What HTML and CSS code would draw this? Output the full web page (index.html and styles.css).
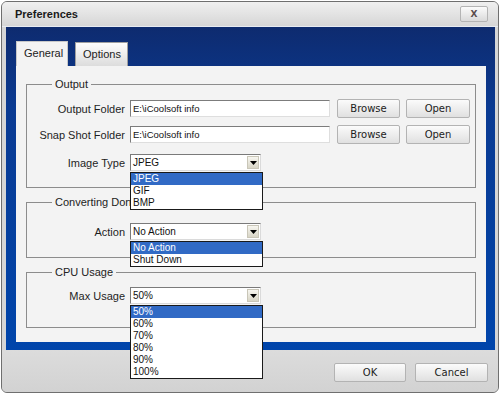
FILE: index.html
```html
<!DOCTYPE html>
<html lang="en">
<head>
    <meta charset="UTF-8">
    <title>Preferences</title>
    <link rel="stylesheet" href="styles.css">
</head>
<body>
    <div class="window">
        <div class="titlebar">
            <span class="title">Preferences</span>
            <button class="close">X</button>
        </div>

        <div class="client">
            <div class="tabs">
                <div class="tab active">General</div>
                <div class="tab">Options</div>
            </div>

            <div class="panel">
                <fieldset class="group group-output">
                    <legend>Output</legend>
                    <div class="row">
                        <label>Output Folder</label>
                        <div class="field">E:\iCoolsoft info</div>
                        <button class="btn browse">Browse</button>
                        <button class="btn open">Open</button>
                    </div>
                    <div class="row">
                        <label>Snap Shot Folder</label>
                        <div class="field">E:\iCoolsoft info</div>
                        <button class="btn browse">Browse</button>
                        <button class="btn open">Open</button>
                    </div>
                    <div class="row row-combo">
                        <label>Image Type</label>
                        <div class="combo">
                            <span>JPEG</span>
                            <span class="arrow"><svg width="7" height="4" viewBox="0 0 7 4"><path d="M0 0h7L3.5 4z" fill="#000"/></svg></span>
                            <ul class="list">
                                <li class="sel">JPEG</li>
                                <li>GIF</li>
                                <li>BMP</li>
                            </ul>
                        </div>
                    </div>
                </fieldset>

                <fieldset class="group group-convert">
                    <legend>Converting Done</legend>
                    <div class="row row-combo">
                        <label>Action</label>
                        <div class="combo">
                            <span>No Action</span>
                            <span class="arrow"><svg width="7" height="4" viewBox="0 0 7 4"><path d="M0 0h7L3.5 4z" fill="#000"/></svg></span>
                            <ul class="list">
                                <li class="sel">No Action</li>
                                <li>Shut Down</li>
                            </ul>
                        </div>
                    </div>
                </fieldset>

                <fieldset class="group group-cpu">
                    <legend>CPU Usage</legend>
                    <div class="row row-combo">
                        <label>Max Usage</label>
                        <div class="combo">
                            <span>50%</span>
                            <span class="arrow"><svg width="7" height="4" viewBox="0 0 7 4"><path d="M0 0h7L3.5 4z" fill="#000"/></svg></span>
                            <ul class="list">
                                <li class="sel">50%</li>
                                <li>60%</li>
                                <li>70%</li>
                                <li>80%</li>
                                <li>90%</li>
                                <li>100%</li>
                            </ul>
                        </div>
                    </div>
                </fieldset>
            </div>
        </div>

        <div class="actions">
            <button class="btn ok">OK</button>
            <button class="btn cancel">Cancel</button>
        </div>
    </div>
</body>
</html>
```

FILE: styles.css
```css
body {
    margin: 0;
    background: #fff;
    font-family: "Liberation Sans", Arial, sans-serif;
}
.window {
    margin: 1px;
    width: 498px;
    height: 392px;
    box-sizing: border-box;
    border: 1px solid #6f6f6f;
    border-radius: 6px;
    background: #d6d6d6;
    display: flex;
    flex-direction: column;
    overflow: hidden;
}
.titlebar {
    height: 25px;
    box-sizing: border-box;
    display: flex;
    align-items: center;
    padding: 0 10px 0 13px;
    background: linear-gradient(#f0f0f0, #d6d6d6);
    border-bottom: 1px solid #e8ecf2;
}
.title { font-weight: bold; font-size: 11px; color: #1a1a1a; }
.close {
    margin-left: auto;
    width: 28px;
    height: 16px;
    padding: 0;
    border: 1px solid #b4b4b4;
    border-radius: 2px;
    background: linear-gradient(#fbfbfb, #dadada);
    font-family: "DejaVu Sans", sans-serif;
    font-weight: bold;
    font-size: 9px;
    color: #5b4d4d;
}
.client {
    margin: 0 3px 0 4px;
    height: 323px;
    box-sizing: border-box;
    padding: 14px 9px 8px 10px;
    background: linear-gradient(#0e2b6f 0%, #0a3a92 25%, #0045ab 100%);
}
.tabs {
    display: flex;
    align-items: flex-end;
    height: 25px;
}
.tab {
    width: 53px;
    height: 24px;
    box-sizing: border-box;
    margin-left: 7px;
    padding-left: 7px;
    border: 1px solid #a0a0a0;
    border-bottom: none;
    background: linear-gradient(#fdfdfd, #dcdcdc);
    font-size: 11px;
    line-height: 22px;
    color: #222;
}
.tab.active {
    width: 52px;
    height: 25px;
    margin-left: 0;
    background: #f3f3f3;
    border-color: #c8c8c8;
}
.panel {
    height: 276px;
    box-sizing: border-box;
    padding: 11px 10px 14px;
    background: #f3f3f3;
}
.group {
    margin: 0;
    padding: 0;
    min-width: 0;
    border: 1px solid #8c8c8c;
}
.group + .group { margin-top: 7px; }
.group legend {
    margin-left: 25px;
    padding: 0 3px;
    font-size: 11px;
    line-height: 14px;
    color: #222;
}
.group-output { padding: 8px 0 16px; }
.group-convert { padding: 14px 0 17px; }
.group-cpu { padding: 8px 0 23px; }
.row {
    display: flex;
    align-items: center;
    height: 19px;
}
.row + .row { margin-top: 7px; }
.row.row-combo { height: 17px; }
.row + .row.row-combo { margin-top: 10px; }
.row label {
    width: 98px;
    margin-right: 5px;
    text-align: right;
    font-size: 11px;
    color: #1e1e1e;
}
.field {
    width: 200px;
    height: 17px;
    box-sizing: border-box;
    border: 1px solid;
    border-color: #7c7c7c #dedede #dedede #7c7c7c;
    background: #fff;
    padding-left: 2px;
    font-size: 9.5px;
    line-height: 15px;
    color: #111;
}
.btn {
    height: 19px;
    padding: 0;
    border: 1px solid #b3b3b3;
    border-radius: 2px;
    background: linear-gradient(#fbfbfb, #e0e0e0);
    font-family: "DejaVu Sans", sans-serif;
    font-size: 10px;
    color: #1c1c1c;
}
.browse { width: 63px; margin-left: 7px; }
.open { width: 64px; margin-left: 6px; }
.combo {
    position: relative;
    width: 131px;
    height: 17px;
    box-sizing: border-box;
    display: flex;
    align-items: center;
    padding-left: 2px;
    border: 1px solid;
    border-color: #7a7a7a #dadada #dadada #7a7a7a;
    background: #fff;
    font-size: 10px;
    color: #111;
}
.arrow {
    margin-left: auto;
    margin-right: 1px;
    width: 12px;
    height: 13px;
    box-sizing: border-box;
    display: flex;
    align-items: center;
    justify-content: center;
    border: 1px solid #c9c6b8;
    background: linear-gradient(#f7f6f0, #d8d5c6);
}
.list {
    position: absolute;
    top: 17px;
    left: -1px;
    z-index: 2;
    width: 133px;
    box-sizing: border-box;
    margin: 0;
    padding: 0;
    list-style: none;
    background: #fff;
    border: 1px solid #1a1a1a;
}
.list li {
    height: 12px;
    line-height: 12px;
    padding-left: 2px;
}
.list li.sel { background: #316ac5; color: #fff; }
.actions {
    flex: 1;
    display: flex;
    justify-content: flex-end;
    align-items: flex-start;
    gap: 9px;
    padding: 13px 10px 0 0;
    background: linear-gradient(#dcdcdc, #d2d2d2);
}
.ok { width: 72px; }
.cancel { width: 73px; }
```
